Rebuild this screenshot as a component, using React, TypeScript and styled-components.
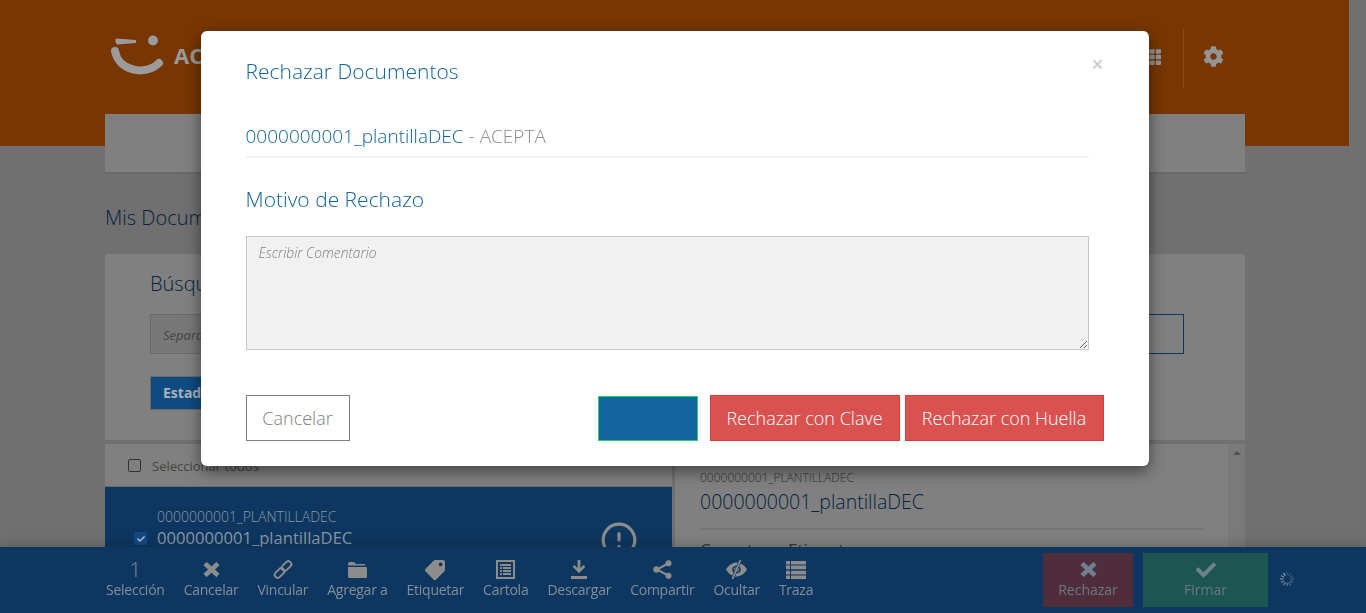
import React from "react";
import styled, { createGlobalStyle } from "styled-components";
import { FaTag, FaCheck, FaCog, FaTh, FaPlus, FaFolder } from "react-icons/fa";
import { CircleAlert } from "lucide-react";

const barBlue = "#0d3760";
const inkBlue = "#05223f";

const GlobalStyle = createGlobalStyle`
  html, body {
    margin: 0;
    height: 100%;
    overflow: hidden;
    font-family: "Open Sans", "Liberation Sans", sans-serif;
    background: #707070;
  }
  * { box-sizing: border-box; }
`;

const Page = styled.div`
  height: 613px;
  overflow: hidden;
  background: #707070;
`;

const Header = styled.header`
  width: 1349px;
  height: 146px;
  background: #783600;
  padding: 29px 104px 0 110px;
  display: flex;
  align-items: flex-start;
`;

const Logo = styled.div`
  display: flex;
  align-items: flex-start;
  gap: 9px;
  margin-top: 6px;
`;

const LogoText = styled.span`
  font-size: 22px;
  font-weight: 700;
  color: #9b9b9b;
  line-height: 40px;
`;

const HeaderTools = styled.div`
  margin-left: auto;
  display: flex;
  align-items: flex-start;
  color: #949494;
`;

const GridIcon = styled.div`
  height: 56px;
  display: flex;
  align-items: center;
  font-size: 18px;
  padding-right: 22px;
`;

const GearIcon = styled.div`
  height: 59px;
  padding: 17px 21px 0 19px;
  font-size: 21px;
  line-height: 21px;
  border-left: 1px solid #8a4a18;
`;

const Main = styled.main`
  width: 1140px;
  margin: -32px 0 0 105px;
`;

const NavBox = styled.nav`
  height: 60px;
  background: #808080;
  border-bottom: 2px solid #6a6a6a;
`;

const PageTitle = styled.h1`
  margin: 30px 0 23px;
  font-size: 20px;
  line-height: 27px;
  font-weight: 300;
  color: ${inkBlue};
`;

const SearchCard = styled.section`
  height: 186px;
  background: #808080;
  border-radius: 3px 3px 0 0;
  padding: 16px 61px 0 45px;
`;

const SearchTitle = styled.h2`
  margin: 0 0 16px;
  font-size: 20px;
  line-height: 28px;
  font-weight: 300;
  color: ${inkBlue};
`;

const SearchRow = styled.div`
  display: flex;
  gap: 20px;
`;

const SearchInput = styled.div<{ $active?: boolean }>`
  flex: 1;
  height: 40px;
  padding: 0 12px;
  border: 1px solid ${(p) => (p.$active ? "#0d3760" : "#6a6a6a")};
  background: ${(p) => (p.$active ? "transparent" : "#787878")};
  color: #444;
  font-size: 13px;
  font-style: italic;
  line-height: 40px;
`;

const StateButton = styled.div`
  width: 180px;
  height: 34px;
  margin-top: 22px;
  padding: 0 12px;
  background: #0f4a80;
  border: 1px solid #6a6a6a;
  color: #a9b2bc;
  font-size: 14px;
  font-weight: 700;
  line-height: 32px;
`;

const Lists = styled.div`
  display: flex;
  gap: 3px;
  margin-top: 4px;
`;

const ListColumn = styled.section`
  width: 567px;
  flex-shrink: 0;
`;

const SelectAllRow = styled.div`
  height: 43px;
  padding: 1px 0 0 23px;
  display: flex;
  align-items: center;
  gap: 11px;
  background: #808080;
  border-bottom: 1px solid #6a6a6a;
  color: #444;
  font-size: 13px;
`;

const EmptyCheck = styled.span`
  width: 13px;
  height: 13px;
  border: 1px solid #333;
  border-radius: 2px;
`;

const DocumentRow = styled.div`
  height: 70px;
  background: ${barBlue};
  padding: 21px 34px 0 29px;
  display: flex;
  align-items: flex-start;
  color: #8b97a4;
`;

const TickBox = styled.span`
  width: 13px;
  height: 13px;
  margin-top: 24px;
  margin-right: 10px;
  background: #0f4a85;
  border-radius: 2px;
  color: #b5bec8;
  font-size: 8px;
  display: flex;
  align-items: center;
  justify-content: center;
`;

const DocumentText = styled.div`
  flex: 1;
`;

const DocumentCode = styled.div`
  font-size: 14px;
  font-weight: 300;
  line-height: 18px;
`;

const DocumentName = styled.div`
  font-size: 16.6px;
  line-height: 24px;
`;

const AlertSlot = styled.div`
  margin-top: 13px;
  height: 38px;
`;

const DetailColumn = styled.section`
  flex: 1;
  height: 113px;
  background: #808080;
  padding: 26px 0 0 25px;
  position: relative;
`;

const ScrollTrack = styled.div`
  position: absolute;
  top: 0;
  right: 0;
  bottom: 0;
  width: 17px;
  background: #7a7a7a;
  &::before {
    content: "";
    position: absolute;
    top: 7px;
    left: 5px;
    border: 4px solid transparent;
    border-top: 0;
    border-bottom: 4px solid #505050;
  }
`;

const DetailCode = styled.div`
  font-size: 12px;
  font-weight: 300;
  line-height: 16px;
  color: #333;
`;

const DetailName = styled.div`
  margin-top: 3px;
  font-size: 19.5px;
  font-weight: 300;
  line-height: 26px;
  color: ${inkBlue};
`;

const DetailDivider = styled.hr`
  width: 503px;
  height: 2px;
  margin: 13px 0 9px;
  border: 0;
  background: #757575;
`;

const DetailSection = styled.div`
  width: 503px;
  display: flex;
  font-size: 17px;
  line-height: 22px;
  color: #333;
`;

const SectionTools = styled.div`
  margin-left: auto;
  padding: 7px 47px 0 0;
  display: flex;
  gap: 32px;
  font-size: 14px;
  color: #333;
`;

const ActionBar = styled.footer`
  position: fixed;
  left: 0;
  right: 0;
  bottom: 0;
  height: 66px;
  padding: 6px 71px 0 106px;
  background: ${barBlue};
  box-shadow: 0 0 14px rgba(0, 0, 0, 0.25);
  display: flex;
  align-items: flex-start;
`;

const ActionItem = styled.div`
  margin-right: 19px;
  padding-top: 6px;
  display: flex;
  flex-direction: column;
  align-items: center;
  color: #838d98;
  font-size: 14px;
  line-height: 20px;
  letter-spacing: -0.25px;
`;

const ActionIcon = styled.div`
  height: 21px;
  display: flex;
  align-items: center;
  justify-content: center;
  color: #8c8c8c;
`;

const MirroredIcon = styled.span`
  display: flex;
  font-size: 20px;
  transform: scaleX(-1);
`;

const Count = styled.span`
  color: #838d98;
  font-size: 20px;
  font-weight: 300;
`;

const DecisionButton = styled.div<{ $tone: string; $width: number }>`
  width: ${(p) => p.$width}px;
  height: 54px;
  margin-left: 10px;
  padding-top: 6px;
  display: flex;
  flex-direction: column;
  align-items: center;
  background: ${(p) => p.$tone};
  color: #6d7785;
  font-size: 14px;
  line-height: 20px;
`;

const DecisionIcon = styled.div`
  height: 21px;
  display: flex;
  align-items: center;
  color: #6e7f8e;
  font-size: 20px;
`;

const Spinner = styled.svg`
  margin: 18px 0 0 11px;
`;

const RightActions = styled.div`
  margin-left: auto;
  display: flex;
  align-items: flex-start;
`;

const Backdrop = styled.div`
  position: fixed;
  inset: 0;
  padding: 31px 17px 0 0;
  display: flex;
  justify-content: center;
  align-items: flex-start;
`;

const Modal = styled.div`
  width: 948px;
  height: 435px;
  padding: 25px 60px 0 45px;
  position: relative;
  background: #fff;
  border-radius: 6px;
  box-shadow: 0 5px 15px rgba(0, 0, 0, 0.5);
`;

const CloseMark = styled.span`
  position: absolute;
  top: 23px;
  right: 45px;
  font-size: 21px;
  line-height: 20px;
  font-weight: 600;
  color: #cccccc;
`;

const ModalTitle = styled.h3`
  margin: 0;
  font-size: 21px;
  line-height: 30px;
  font-weight: 300;
  color: #12639e;
`;

const DocumentLine = styled.div`
  margin-top: 38px;
  padding-bottom: 8px;
  border-bottom: 2px solid #f2f2f2;
  font-size: 19px;
  line-height: 24px;
  font-weight: 300;
  color: #12639e;
`;

const Issuer = styled.span`
  color: #8a8a8a;
`;

const ReasonLabel = styled.h4`
  margin: 26px 0 22px;
  font-size: 21px;
  line-height: 30px;
  font-weight: 300;
  color: #12639e;
`;

const CommentBox = styled.textarea`
  display: block;
  width: 100%;
  height: 114px;
  padding: 6px 12px;
  border: 1px solid #c8c8c8;
  border-radius: 0;
  background: #f1f1f1;
  font-family: inherit;
  font-size: 13.8px;
  line-height: 20px;
  outline: none;
  &::placeholder {
    color: #808080;
    font-style: italic;
    font-weight: 300;
    opacity: 1;
  }
`;

const ModalFooter = styled.div`
  margin: 45px -15px 0 0;
  display: flex;
  align-items: flex-end;
`;

const CancelButton = styled.button`
  width: 104px;
  height: 46px;
  margin-right: auto;
  padding: 0;
  border: 1px solid #808080;
  background: #fff;
  color: #808080;
  font-family: inherit;
  font-size: 18px;
  font-weight: 300;
`;

const BlankButton = styled.button`
  width: 100px;
  height: 45px;
  margin-right: 12px;
  border: 1px solid #2ecc71;
  background: #12639e;
`;

const RejectButton = styled.button<{ $width: number }>`
  width: ${(p) => p.$width}px;
  height: 46px;
  margin-left: ${(p) => (p.$width > 195 ? "5px" : "0")};
  padding: 0;
  border: 1px solid #d43f3a;
  background: #da5250;
  color: #fff;
  font-family: inherit;
  font-size: 18px;
  font-weight: 300;
`;

const CrossIcon = () => (
  <svg width="17" height="15" viewBox="0 0 17 15" stroke="currentColor" strokeWidth="4.6">
    <path d="M2 1.5 L15 13.5 M15 1.5 L2 13.5" fill="none" />
  </svg>
);

const LinkIcon = () => (
  <svg width="20" height="19" viewBox="0 0 20 19" fill="none" stroke="currentColor" strokeWidth="2">
    <rect x="1" y="10" width="11" height="6" rx="3" transform="rotate(-45 6.5 13)" />
    <rect x="8" y="3" width="11" height="6" rx="3" transform="rotate(-45 13.5 6)" />
  </svg>
);

const FolderIcon = () => (
  <svg width="19" height="16" viewBox="0 0 19 16" fill="currentColor">
    <path d="M0 2 Q0 0 2 0 H6 L8 2 H16 Q17.5 2 17.5 3.5 H0Z" />
    <path d="M0 5 H18 Q19 5 19 6 V14.5 Q19 16 17.5 16 H1.5 Q0 16 0 14.5Z" />
  </svg>
);

const StatementIcon = () => (
  <svg width="19" height="19" viewBox="0 0 19 19" fill="currentColor">
    <path fillRule="evenodd" d="M0 0 H19 V19 H0Z M2 2 V17 H17 V2Z" />
    <path d="M4 4 H15 V6 H4Z M4 7 H6 V9 H4Z M7 7 H15 V9 H7Z M4 10 H6 V12 H4Z M7 10 H15 V12 H7Z M4 13 H6 V15 H4Z M7 13 H15 V15 H7Z" />
  </svg>
);

const DownloadIcon = () => (
  <svg width="16" height="19" viewBox="0 0 16 19" fill="currentColor">
    <path d="M6.6 0 H9.4 V8 L12.6 5 L14.4 6.8 L8 13.2 L1.6 6.8 L3.4 5 L6.6 8Z" />
    <path d="M0 16 H16 V19 H0Z" />
  </svg>
);

const ShareIcon = () => (
  <svg width="19" height="19" viewBox="0 0 19 19" fill="currentColor" stroke="currentColor">
    <path d="M15 3.5 L4 9.5 L15 15.5" fill="none" strokeWidth="2" />
    <circle cx="15.5" cy="3.3" r="2.8" strokeWidth="0.6" />
    <circle cx="3.5" cy="9.5" r="3" strokeWidth="0.6" />
    <circle cx="15.5" cy="15.7" r="2.8" strokeWidth="0.6" />
  </svg>
);

const HiddenEyeIcon = () => (
  <svg width="21" height="19" viewBox="0 0 21 19" fill="currentColor">
    <path d="M0 9.5 C3 4.5 7 2.5 10.5 2.5 C14 2.5 18 4.5 21 9.5 C18 14.5 14 16.5 10.5 16.5 C7 16.5 3 14.5 0 9.5Z" />
    <ellipse cx="10.5" cy="9.5" rx="4.2" ry="3.8" fill={barBlue} />
    <circle cx="10.5" cy="9.5" r="2.6" />
    <path d="M14.5 0 L6.5 19" stroke={barBlue} strokeWidth="3" />
    <path d="M14.5 0 L6.5 19" stroke="currentColor" strokeWidth="1.8" />
  </svg>
);

const TraceIcon = () => (
  <svg width="20" height="18" viewBox="0 0 20 18" fill="currentColor">
    <path d="M0 0 H4 V3.6 H0Z M5 0 H20 V3.6 H5Z M0 4.6 H4 V8.2 H0Z M5 4.6 H20 V8.2 H5Z M0 9.8 H4 V13.4 H0Z M5 9.8 H20 V13.4 H5Z M0 14.4 H4 V18 H0Z M5 14.4 H20 V18 H5Z" />
  </svg>
);

const actions = [
  { label: "Cancelar", icon: <CrossIcon /> },
  { label: "Vincular", icon: <LinkIcon /> },
  { label: "Agregar a", icon: <FolderIcon /> },
  {
    label: "Etiquetar",
    icon: (
      <MirroredIcon>
        <FaTag />
      </MirroredIcon>
    ),
  },
  { label: "Cartola", icon: <StatementIcon /> },
  { label: "Descargar", icon: <DownloadIcon /> },
  { label: "Compartir", icon: <ShareIcon /> },
  { label: "Ocultar", icon: <HiddenEyeIcon /> },
  { label: "Traza", icon: <TraceIcon /> },
];

const spinnerTicks = Array.from({ length: 12 }, (_, i) => i * 30);

const App = () => {
  return (
    <>
      <GlobalStyle />
      <Page>
        <Header>
          <Logo>
            <svg width="55" height="44" viewBox="0 0 55 44" fill="#9b9b9b">
              <path d="M6 3.5 L26 5 L26 8 L7 9.5 Q4.5 6.5 6 3.5Z" />
              <circle cx="43" cy="5.5" r="5" />
              <path
                d="M5 16 C8 35 35 42 49 28"
                fill="none"
                stroke="#9b9b9b"
                strokeWidth="8"
                strokeLinecap="round"
              />
            </svg>
            <LogoText>ACEPTA</LogoText>
          </Logo>
          <HeaderTools>
            <GridIcon>
              <FaTh />
            </GridIcon>
            <GearIcon>
              <FaCog />
            </GearIcon>
          </HeaderTools>
        </Header>
        <Main>
          <NavBox />
          <PageTitle>Mis Documentos</PageTitle>
          <SearchCard>
            <SearchTitle>Búsqueda</SearchTitle>
            <SearchRow>
              <SearchInput>Separar por coma</SearchInput>
              <SearchInput $active />
            </SearchRow>
            <StateButton>Estado</StateButton>
          </SearchCard>
          <Lists>
            <ListColumn>
              <SelectAllRow>
                <EmptyCheck />
                Seleccionar todos
              </SelectAllRow>
              <DocumentRow>
                <TickBox>
                  <FaCheck />
                </TickBox>
                <DocumentText>
                  <DocumentCode>0000000001_PLANTILLADEC</DocumentCode>
                  <DocumentName>0000000001_plantillaDEC</DocumentName>
                </DocumentText>
                <AlertSlot>
                  <CircleAlert size={38} strokeWidth={2} color="#8c8c8c" />
                </AlertSlot>
              </DocumentRow>
            </ListColumn>
            <DetailColumn>
              <ScrollTrack />
              <DetailCode>0000000001_PLANTILLADEC</DetailCode>
              <DetailName>0000000001_plantillaDEC</DetailName>
              <DetailDivider />
              <DetailSection>
                Carpetas y Etiquetas
                <SectionTools>
                  <FaPlus />
                  <FaFolder />
                </SectionTools>
              </DetailSection>
            </DetailColumn>
          </Lists>
        </Main>
        <ActionBar>
          <ActionItem>
            <ActionIcon>
              <Count>1</Count>
            </ActionIcon>
            Selección
          </ActionItem>
          {actions.map((action) => (
            <ActionItem key={action.label}>
              <ActionIcon>{action.icon}</ActionIcon>
              {action.label}
            </ActionItem>
          ))}
          <RightActions>
            <DecisionButton $tone="#4f2d3a" $width={90}>
              <DecisionIcon>
                <CrossIcon />
              </DecisionIcon>
              Rechazar
            </DecisionButton>
            <DecisionButton $tone="#1b5650" $width={125}>
              <DecisionIcon>
                <FaCheck />
              </DecisionIcon>
              Firmar
            </DecisionButton>
            <Spinner width="16" height="16" viewBox="0 0 16 16">
              {spinnerTicks.map((angle, i) => (
                <line
                  key={angle}
                  x1="8"
                  y1="1"
                  x2="8"
                  y2="4.5"
                  stroke="#8c96a2"
                  strokeOpacity={0.25 + (i / 12) * 0.75}
                  strokeWidth="1.4"
                  transform={`rotate(${angle} 8 8)`}
                />
              ))}
            </Spinner>
          </RightActions>
        </ActionBar>
        <Backdrop>
          <Modal>
            <CloseMark>×</CloseMark>
            <ModalTitle>Rechazar Documentos</ModalTitle>
            <DocumentLine>
              0000000001_plantillaDEC <Issuer>- ACEPTA</Issuer>
            </DocumentLine>
            <ReasonLabel>Motivo de Rechazo</ReasonLabel>
            <CommentBox placeholder="Escribir Comentario" />
            <ModalFooter>
              <CancelButton>Cancelar</CancelButton>
              <BlankButton />
              <RejectButton $width={190}>Rechazar con Clave</RejectButton>
              <RejectButton $width={199}>Rechazar con Huella</RejectButton>
            </ModalFooter>
          </Modal>
        </Backdrop>
      </Page>
    </>
  );
};

export default App;
